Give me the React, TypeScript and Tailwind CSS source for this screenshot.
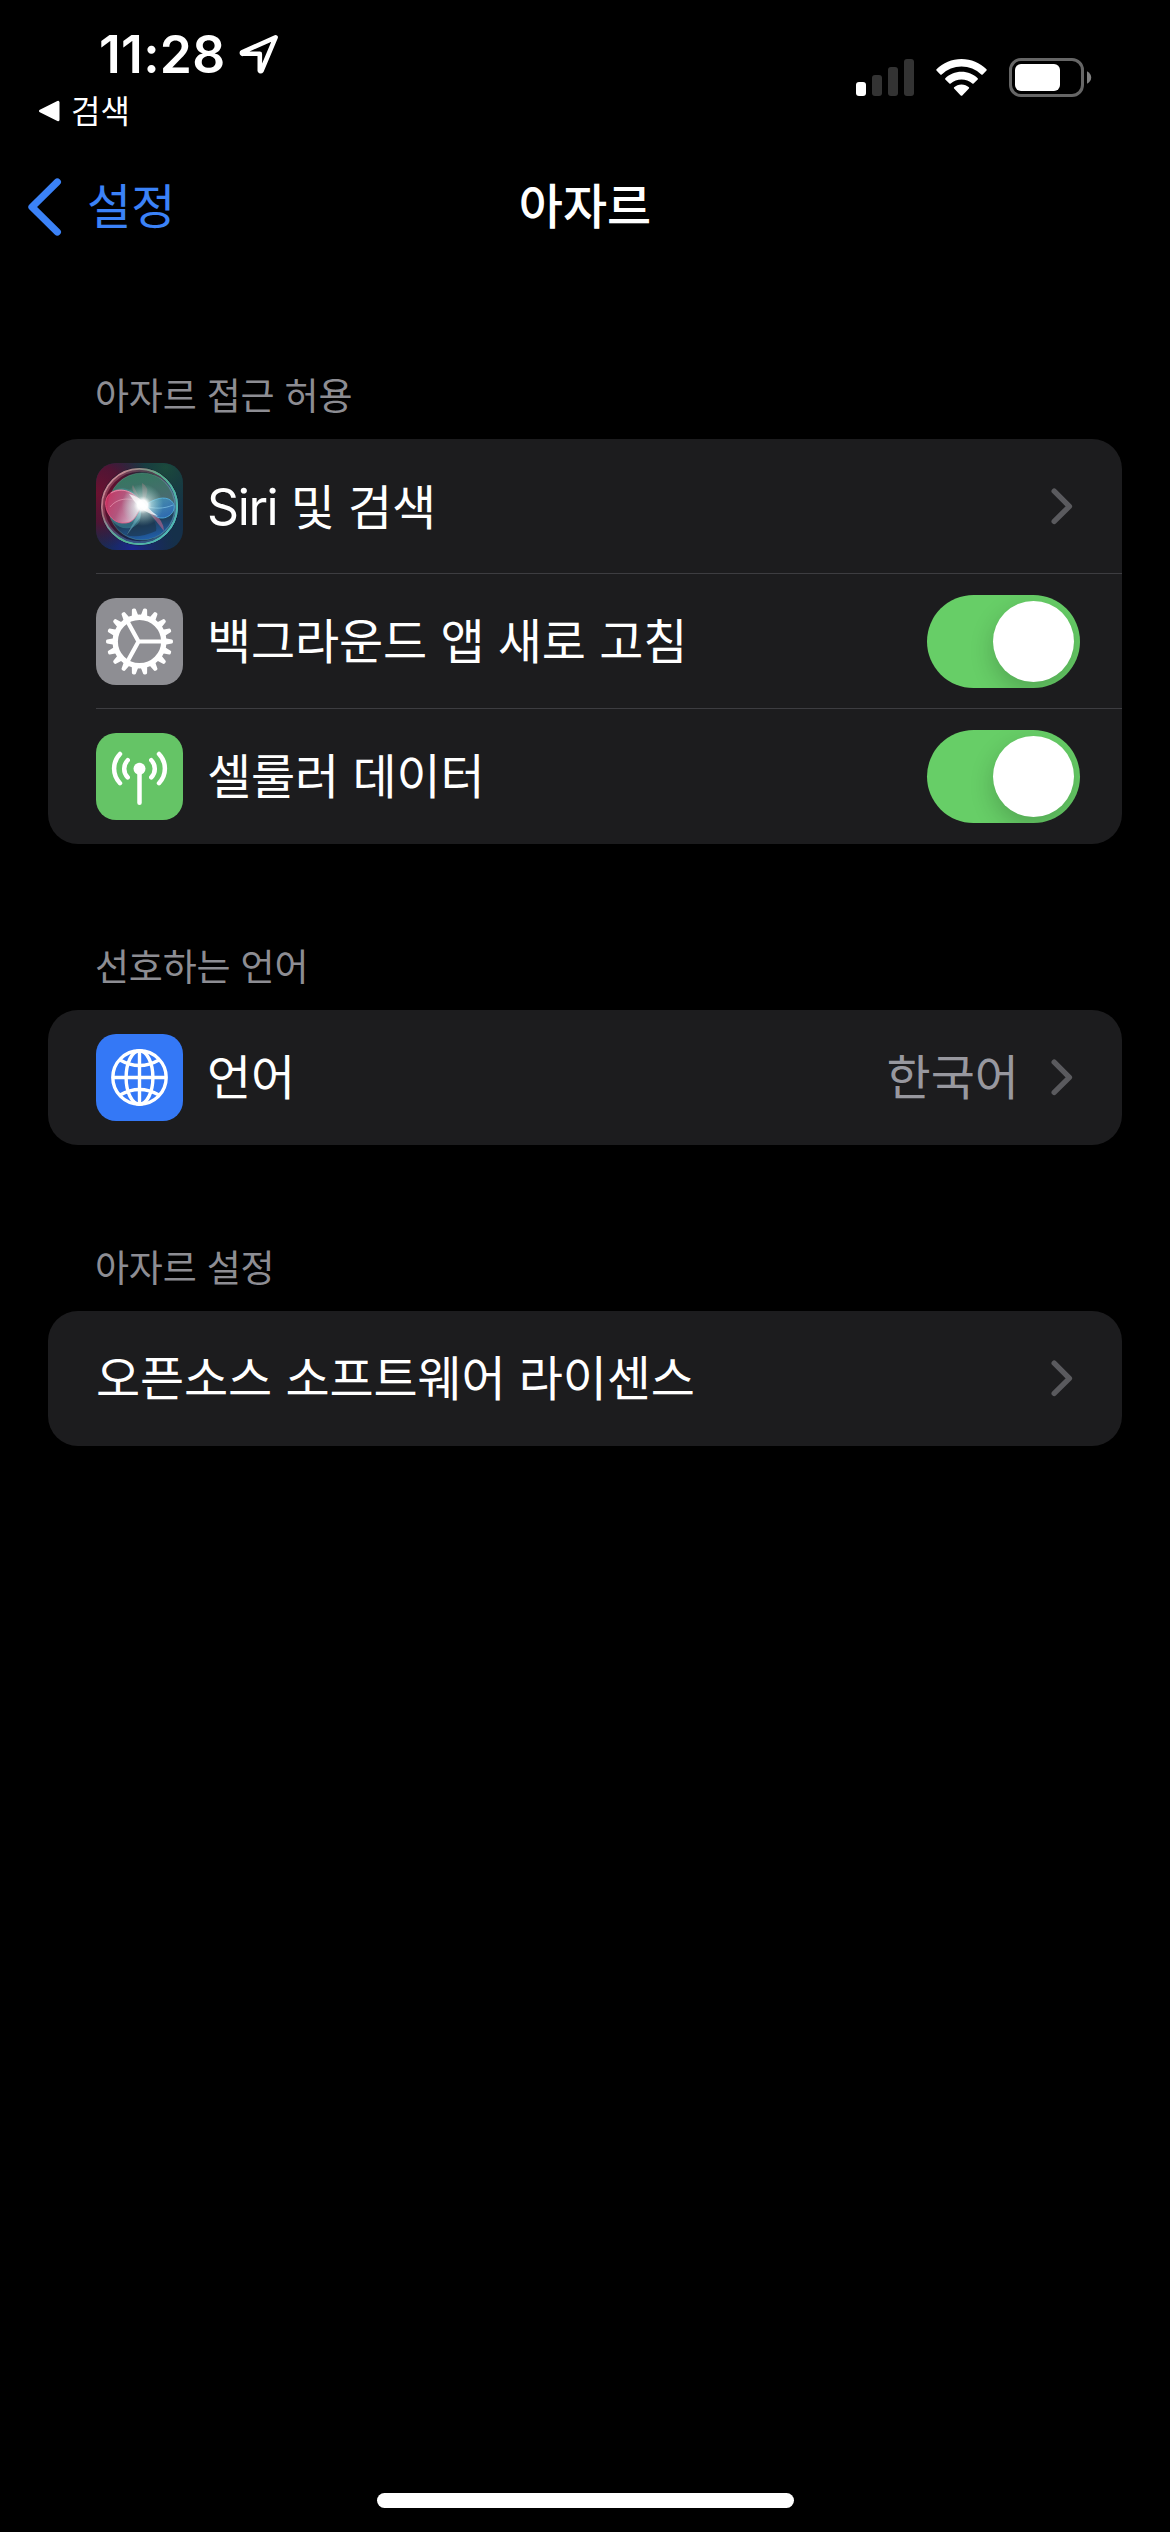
import type { ReactNode } from 'react'

const GEAR_TEETH = Array.from({ length: 18 }, (_, i) => i * 20)

function SiriIcon() {
  return (
    <svg viewBox="0 0 87 87" className="size-[87px] shrink-0">
      <defs>
        <clipPath id="siri-tile">
          <rect width="87" height="87" rx="20" />
        </clipPath>
        <radialGradient id="siri-red" cx="0" cy="0.35" r="0.65">
          <stop offset="0" stopColor="#6b1230" />
          <stop offset="0.5" stopColor="#5a1030" stopOpacity="0.85" />
          <stop offset="1" stopColor="#4a1030" stopOpacity="0" />
        </radialGradient>
        <radialGradient id="siri-green" cx="0.8" cy="0.05" r="0.6">
          <stop offset="0" stopColor="#1b4a3c" />
          <stop offset="1" stopColor="#173c38" stopOpacity="0" />
        </radialGradient>
        <radialGradient id="siri-blue" cx="0.42" cy="1" r="0.5">
          <stop offset="0" stopColor="#1c2592" />
          <stop offset="1" stopColor="#1b2560" stopOpacity="0" />
        </radialGradient>
        <linearGradient id="siri-ring" x1="0" y1="0.1" x2="0.8" y2="1">
          <stop offset="0" stopColor="#d09aa0" />
          <stop offset="0.35" stopColor="#b8647c" />
          <stop offset="0.6" stopColor="#7a96e0" />
          <stop offset="1" stopColor="#62c0f0" />
        </linearGradient>
        <linearGradient id="siri-ring-top" x1="0" y1="0" x2="1" y2="0.6">
          <stop offset="0.2" stopColor="#5fae8a" stopOpacity="0" />
          <stop offset="0.6" stopColor="#4fb488" />
          <stop offset="1" stopColor="#4fb9b0" />
        </linearGradient>
        <linearGradient id="siri-orb" x1="0.3" y1="0" x2="0.5" y2="1">
          <stop offset="0" stopColor="#34785f" />
          <stop offset="0.5" stopColor="#4a6a70" />
          <stop offset="0.75" stopColor="#1e3f5c" />
          <stop offset="1" stopColor="#215ea8" />
        </linearGradient>
        <linearGradient id="siri-pink" x1="0" y1="0" x2="1" y2="0.4">
          <stop offset="0" stopColor="#d8285c" />
          <stop offset="0.5" stopColor="#c2507c" />
          <stop offset="1" stopColor="#f0c8dc" />
        </linearGradient>
        <linearGradient id="siri-lobe" x1="0" y1="0" x2="1" y2="1">
          <stop offset="0" stopColor="#4aa5b8" />
          <stop offset="1" stopColor="#2f6fd0" />
        </linearGradient>
        <radialGradient id="siri-flare">
          <stop offset="0" stopColor="#fff" />
          <stop offset="0.24" stopColor="#fff" stopOpacity="0.97" />
          <stop offset="0.42" stopColor="#e0f6f2" stopOpacity="0.55" />
          <stop offset="1" stopColor="#a0e0d8" stopOpacity="0" />
        </radialGradient>
      </defs>
      <g clipPath="url(#siri-tile)">
        <rect width="87" height="87" fill="#15304a" />
        <rect width="87" height="87" fill="url(#siri-green)" />
        <rect width="87" height="87" fill="url(#siri-blue)" />
        <rect width="87" height="87" fill="url(#siri-red)" />
        <circle cx="43.5" cy="43.5" r="39.200" fill="#14202c" fillOpacity="0.55" />
        <circle cx="43.5" cy="43.5" r="37" fill="url(#siri-red)" />
        <circle cx="46" cy="43.5" r="33.500" fill="url(#siri-orb)" />
        <circle cx="46" cy="43.5" r="33.500" fill="none" stroke="#69b59a" strokeOpacity="0.35" />
        <circle cx="43.5" cy="43.5" r="35.800" fill="none" stroke="url(#siri-ring)" strokeOpacity="0.35" strokeWidth="2" />
        <circle cx="43.5" cy="43.5" r="37.600" fill="none" stroke="url(#siri-ring)" strokeWidth="1.800" />
        <circle cx="43.5" cy="43.5" r="37.600" fill="none" stroke="url(#siri-ring-top)" strokeWidth="1.800" />
        <path d="M47 42 37 22Q35 24 38 30ZM47 42 46 20Q54 24 50 34Z" fill="#b0848a" fillOpacity="0.4" />
        <path d="M46 44 30 72Q42 76 60 68 62 60 50 46Z" fill="#1c3448" fillOpacity="0.6" />
        <path d="M46 44 30 73 44 55Z" fill="#7fc6e0" fillOpacity="0.5" />
        <path d="M48 43 68 68Q68 58 56 48Z" fill="#c0688c" fillOpacity="0.6" />
        <path d="M46 42C40 22 16 20 12 36S20 68 34 65 44 50 46 42Z" fill="#4aa5b0" fillOpacity="0.4" />
        <path
          d="M46 42C38 26 20 23 12.500 32S13 59 26 60 40 52 46 42Z"
          fill="url(#siri-pink)"
          fillOpacity="0.88"
          stroke="#f05c88"
          strokeWidth="0.8"
        />
        <path d="M46 41C36 34 22 34 14 44M46 40C38 28 26 24 15 30" fill="none" stroke="#f0a8c0" strokeOpacity="0.6" />
        <path
          d="M49 42C58 36 69 32 75.500 38S76 54 67 55 56 47 49 42Z"
          fill="url(#siri-lobe)"
          fillOpacity="0.75"
          stroke="#58b8e4"
          strokeWidth="0.8"
        />
        <path d="M49 43C58 46 68 46 77 42" fill="none" stroke="#8fd0f0" strokeOpacity="0.6" />
        <circle cx="46.5" cy="42" r="21" fill="url(#siri-flare)" />
        <path d="M33 31Q44 34 49 41T62 53Q52 51 45 45T33 31Z" fill="#fff" fillOpacity="0.7" />
      </g>
    </svg>
  )
}

function GearIcon() {
  return (
    <svg viewBox="0 0 87 87" className="size-[87px] shrink-0">
      <rect width="87" height="87" rx="20" fill="#8e8e93" />
      <g transform="translate(43.5 43.5)">
        <circle r="24.3" fill="none" stroke="#fff" strokeWidth="5.4" />
        {GEAR_TEETH.map((angle) => (
          <path
            key={angle}
            d="M25.5-3.3 32.4-2Q33.5-1.8 33.5 0T32.4 2L25.5 3.3Z"
            fill="#fff"
            transform={`rotate(${angle})`}
          />
        ))}
        <path d="M-2 0H23M-1 0-12 20M-1 0-12-20" stroke="#fff" strokeWidth="4.2" fill="none" />
      </g>
    </svg>
  )
}

function AntennaIcon() {
  return (
    <svg viewBox="0 0 87 87" className="size-[87px] shrink-0">
      <rect width="87" height="87" rx="20" fill="#65c466" />
      <circle cx="43.5" cy="35.8" r="6" fill="#fff" />
      <g fill="none" stroke="#fff" strokeWidth="4.5" strokeLinecap="round">
        <path d="M43.5 38V69.7" />
        <path d="M55.3 27.2a12.3 12.3 0 0 1 0 17.2M31.7 27.2a12.3 12.3 0 0 0 0 17.2" />
        <path d="M63 21a21 21 0 0 1 0 29.2M24 21a21 21 0 0 0 0 29.2" />
      </g>
    </svg>
  )
}

function GlobeIcon() {
  return (
    <svg viewBox="0 0 87 87" className="size-[87px] shrink-0">
      <rect width="87" height="87" rx="20" fill="#3478f6" />
      <g fill="none" stroke="#fff" strokeWidth="3.4">
        <circle cx="43.5" cy="43.5" r="26.7" />
        <ellipse cx="43.5" cy="43.5" rx="13.4" ry="26.7" />
        <path d="M43.5 17V70M17 43.5H70" />
        <path d="M24 26Q43.5 37 63 26M24 61Q43.5 50 63 61" />
      </g>
    </svg>
  )
}

function Chevron() {
  return (
    <svg viewBox="0 0 22 37" className="h-[37px] w-[22px] shrink-0">
      <path
        d="M3.2 3.2 18.4 18.3 3.2 33.4"
        fill="none"
        stroke="#5a5a5e"
        strokeWidth="5.4"
        strokeLinecap="round"
        strokeLinejoin="round"
      />
    </svg>
  )
}

function Toggle() {
  return (
    <div
      role="switch"
      aria-checked="true"
      className="flex h-[93px] w-[153px] shrink-0 items-center justify-end overflow-hidden rounded-full bg-[#67ce67] pr-1.5"
    >
      <div className="size-[81px] rounded-full bg-white shadow-[0_9px_24px_rgba(0,0,0,0.2)]" />
    </div>
  )
}

function Section({ title, children }: { title: string; children: ReactNode }) {
  return (
    <section className="mb-[166px]">
      <h2 className="-mt-[73px] mb-3 h-[61px] pl-[47px] text-[37px] leading-[61px] tracking-[-0.2px] text-[#8d8d93]">
        {title}
      </h2>
      <div className="overflow-hidden rounded-[30px] bg-[#1c1c1e]">{children}</div>
    </section>
  )
}

type RowProps = {
  icon?: ReactNode
  label: ReactNode
  trailing: ReactNode
  toggle?: boolean
  last?: boolean
}

function Row({ icon, label, trailing, toggle, last }: RowProps) {
  return (
    <div className="pl-12">
      <div
        className={`flex h-[135px] items-center border-b ${last ? 'border-transparent' : 'border-[#3d3d41]'} ${toggle ? 'pr-[42px]' : 'pr-[49px]'}`}
      >
        {icon && <div className="mr-6">{icon}</div>}
        <div className="flex-1 pt-0.5 text-[48px] leading-none tracking-[-0.15px] whitespace-nowrap text-white">
          {label}
        </div>
        {trailing}
      </div>
    </div>
  )
}

function StatusBar() {
  return (
    <div className="flex h-[141px] justify-between pr-[78px] pl-[38px]">
      <div className="pt-[25px]">
        <div className="flex h-[58px] items-center pl-[61px]">
          <span className="text-[51.5px] leading-[58px] font-semibold tracking-[0.3px] text-white">11:28</span>
          <svg viewBox="0 0 40 40" className="ml-[13px] size-10">
            <path
              d="M36.6 3.3 3 18.3Q2.6 20 4 19.8H20.8V36.6Q21.6 38 22.6 36.6Z"
              fill="none"
              stroke="#fff"
              strokeWidth="4.6"
              strokeLinejoin="round"
            />
          </svg>
        </div>
        <div className="flex h-[56px] items-center">
          <svg viewBox="0 0 22 22" className="size-[22px]">
            <path d="M2.5 11 20 2.3V19.7Z" fill="#fff" stroke="#fff" strokeWidth="3" strokeLinejoin="round" />
          </svg>
          <span className="ml-[11px] pt-px text-[32px] leading-[56px] text-white">검색</span>
        </div>
      </div>
      <div className="flex h-[155px] items-center">
        <svg viewBox="0 0 58 37" className="h-[37px] w-[58px]">
          <rect y="23" width="10" height="14" rx="3" fill="#fff" />
          <rect x="16" y="16" width="10" height="21" rx="3" fill="#333" />
          <rect x="32" y="8" width="10" height="29" rx="3" fill="#333" />
          <rect x="48" width="10" height="37" rx="3" fill="#333" />
        </svg>
        <svg viewBox="0 0 51 37" className="ml-[22px] h-[37px] w-[51px]">
          <path
            d="M25.5 0C35.2 0 44 3.8 50.5 10.2Q51 11 50.5 11.5L46.7 15.4Q46 16 45.3 15.4A28.5 28.5 0 0 0 5.7 15.4Q5 16 4.3 15.4L.5 11.5Q0 11 .5 10.2C7 3.8 15.8 0 25.5 0Z"
            fill="#fff"
          />
          <path
            d="M25.5 12.7C31.8 12.7 37.5 15.2 41.7 19.2Q42.2 19.9 41.7 20.5L37.6 24.6Q37 25.1 36.3 24.6A16 16 0 0 0 14.7 24.6Q14 25.1 13.4 24.6L9.3 20.5Q8.8 19.9 9.3 19.2C13.5 15.2 19.2 12.7 25.5 12.7Z"
            fill="#fff"
          />
          <path
            d="M25.5 25.5C28.4 25.5 31 26.6 32.9 28.3Q33.4 29 32.9 29.6L26.3 36.5Q25.5 37.2 24.7 36.5L18.1 29.6Q17.6 29 18.1 28.3C20 26.6 22.6 25.5 25.5 25.5Z"
            fill="#fff"
          />
        </svg>
        <svg viewBox="0 0 83 39" className="ml-[22px] h-[39px] w-[83px]">
          <rect x="1.5" y="1.5" width="72" height="36" rx="10.5" fill="none" stroke="#666" strokeWidth="3" />
          <rect x="6" y="6" width="45" height="27" rx="6" fill="#fff" />
          <path d="M78 13.2Q82.2 15.500 82.2 19.5T78 25.8Z" fill="#808080" />
        </svg>
      </div>
    </div>
  )
}

export default function App() {
  return (
    <div className="flex h-[2532px] w-[1170px] flex-col bg-black font-['Inter','Noto_Sans_CJK_KR',sans-serif]">
      <StatusBar />

      <header className="grid h-[132px] grid-cols-3 items-center">
        <button className="flex items-center pl-7 text-[#3b82f7]">
          <svg viewBox="0 0 34 58" className="h-[58px] w-[34px]">
            <path
              d="M29.3 4 4 29 29.3 54"
              fill="none"
              stroke="currentColor"
              strokeWidth="7.3"
              strokeLinecap="round"
              strokeLinejoin="round"
            />
          </svg>
          <span className="ml-[25px] text-[48px] leading-none">설정</span>
        </button>
        <h1 className="text-center text-[48px] leading-none font-medium text-white">아자르</h1>
      </header>

      <main className="flex-1 px-12 pt-[166px]">
        <Section title="아자르 접근 허용">
          <Row
            icon={<SiriIcon />}
            label={
              <>
                <span className="text-[50px] leading-none tracking-[-1.4px]">Siri</span> 및 검색
              </>
            }
            trailing={<Chevron />}
          />
          <Row icon={<GearIcon />} label="백그라운드 앱 새로 고침" trailing={<Toggle />} toggle />
          <Row icon={<AntennaIcon />} label="셀룰러 데이터" trailing={<Toggle />} toggle last />
        </Section>

        <Section title="선호하는 언어">
          <Row
            icon={<GlobeIcon />}
            label="언어"
            trailing={
              <div className="flex items-center">
                <span className="mr-8 pt-0.5 text-[48px] leading-none text-[#98989f]">한국어</span>
                <Chevron />
              </div>
            }
            last
          />
        </Section>

        <Section title="아자르 설정">
          <Row label="오픈소스 소프트웨어 라이센스" trailing={<Chevron />} last />
        </Section>
      </main>

      <div className="mx-auto mb-6 h-[15px] w-[417px] rounded-full bg-white" />
    </div>
  )
}
